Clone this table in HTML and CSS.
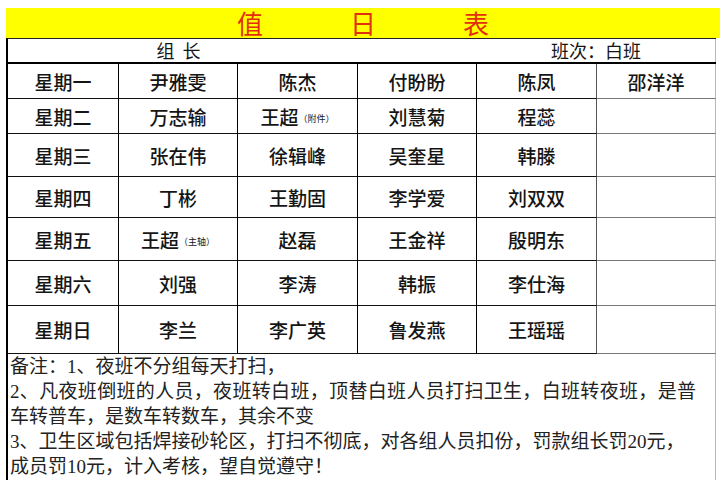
FILE: index.html
```html
<!DOCTYPE html>
<html lang="zh-CN">
<head>
<meta charset="utf-8">
<title>值日表</title>
<link rel="stylesheet" href="styles.css">
</head>
<body>
<div class="page">
  <div class="title"><span>值</span><span>日</span><span>表</span></div>
  <div class="sheet">
    <div class="head">
      <div class="h-leader">组&nbsp;&nbsp;长</div>
      <div class="h-shift">班次：白班</div>
    </div>
    <div class="grid">
      <div class="c">星期一</div><div class="c">尹雅雯</div><div class="c">陈杰</div><div class="c">付盼盼</div><div class="c c5">陈凤</div><div class="c c6">邵洋洋</div>
      <div class="c">星期二</div><div class="c">万志输</div><div class="c">王超<small>（附件）</small></div><div class="c">刘慧菊</div><div class="c c5">程蕊</div><div class="c c6"></div>
      <div class="c">星期三</div><div class="c">张在伟</div><div class="c">徐辑峰</div><div class="c">吴奎星</div><div class="c c5">韩滕</div><div class="c c6"></div>
      <div class="c">星期四</div><div class="c">丁彬</div><div class="c">王勤固</div><div class="c">李学爱</div><div class="c c5">刘双双</div><div class="c c6"></div>
      <div class="c">星期五</div><div class="c">王超<small>（主轴）</small></div><div class="c">赵磊</div><div class="c">王金祥</div><div class="c c5">殷明东</div><div class="c c6"></div>
      <div class="c">星期六</div><div class="c">刘强</div><div class="c">李涛</div><div class="c">韩振</div><div class="c c5">李仕海</div><div class="c c6"></div>
      <div class="c">星期日</div><div class="c">李兰</div><div class="c">李广英</div><div class="c">鲁发燕</div><div class="c c5">王瑶瑶</div><div class="c c6"></div>
    </div>
    <div class="notes">
      <div class="ln">备注：1、夜班不分组每天打扫，</div>
      <div class="ln just">2、凡夜班倒班的人员，夜班转白班，顶替白班人员打扫卫生，白班转夜班，是普</div>
      <div class="ln">车转普车，是数车转数车，其余不变</div>
      <div class="ln">3、卫生区域包括焊接砂轮区，打扫不彻底，对各组人员扣份，罚款组长罚20元，</div>
      <div class="ln">成员罚10元，计入考核，望自觉遵守！</div>
    </div>
  </div>
</div>
</body>
</html>
```
FILE: styles.css
```css
html, body {
  margin: 0;
  padding: 0;
  background: #fff;
}
body {
  width: 720px;
  height: 480px;
  overflow: hidden;
  font-family: "Noto Sans CJK SC", "Noto Sans", sans-serif;
  color: #151515;
}
.page {
  padding-top: 8px;
}
.title {
  margin-left: 6px;
  width: 714px;
  height: 30px;
  background: #ffff00;
  display: flex;
  align-items: center;
  padding-left: 231px;
  gap: 87px;
  box-sizing: border-box;
  font-size: 26px;
  line-height: 30px;
  color: #e2300e;
}
.sheet {
  margin-left: 6px;
  width: 710px;
  box-sizing: border-box;
  border-left: 2px solid #000;
  border-top: 1px solid #222;
}
.head {
  display: grid;
  grid-template-columns: 111px 119px 120px 119px 120px 119px;
  height: 25px;
  box-sizing: border-box;
  border-bottom: 2px solid #000;
  font-size: 18px;
  line-height: 23px;
}
.h-leader {
  grid-column: 2;
  text-align: center;
}
.h-shift {
  grid-column: 5 / 7;
  text-align: center;
  border-right: 1px solid #b8b8b8;
}
.grid {
  display: grid;
  grid-template-columns: 111px 119px 120px 119px 120px 119px;
  grid-template-rows: 35px 35px 43px 41px 43px 45px 48px;
}
.c {
  box-sizing: border-box;
  border-right: 1px solid #000;
  border-bottom: 1px solid #111;
  display: flex;
  align-items: center;
  justify-content: center;
  font-size: 19px;
  font-weight: 500;
}
.c5 {
  border-right-color: #555;
}
.c6 {
  border-right-color: #b8b8b8;
  border-bottom-color: #777;
}
.c small {
  font-size: 9px;
  font-weight: 400;
  margin-top: 4px;
}
.notes {
  box-sizing: border-box;
  height: 140px;
  border-right: 1px solid #b8b8b8;
  padding-left: 2px;
  font-family: "Liberation Serif", "Noto Sans CJK SC", serif;
  font-size: 19px;
  line-height: 25px;
  color: #222;
}
.ln {
  white-space: nowrap;
}
.just {
  width: 686px;
  text-align: justify;
  text-align-last: justify;
  white-space: normal;
}
```
